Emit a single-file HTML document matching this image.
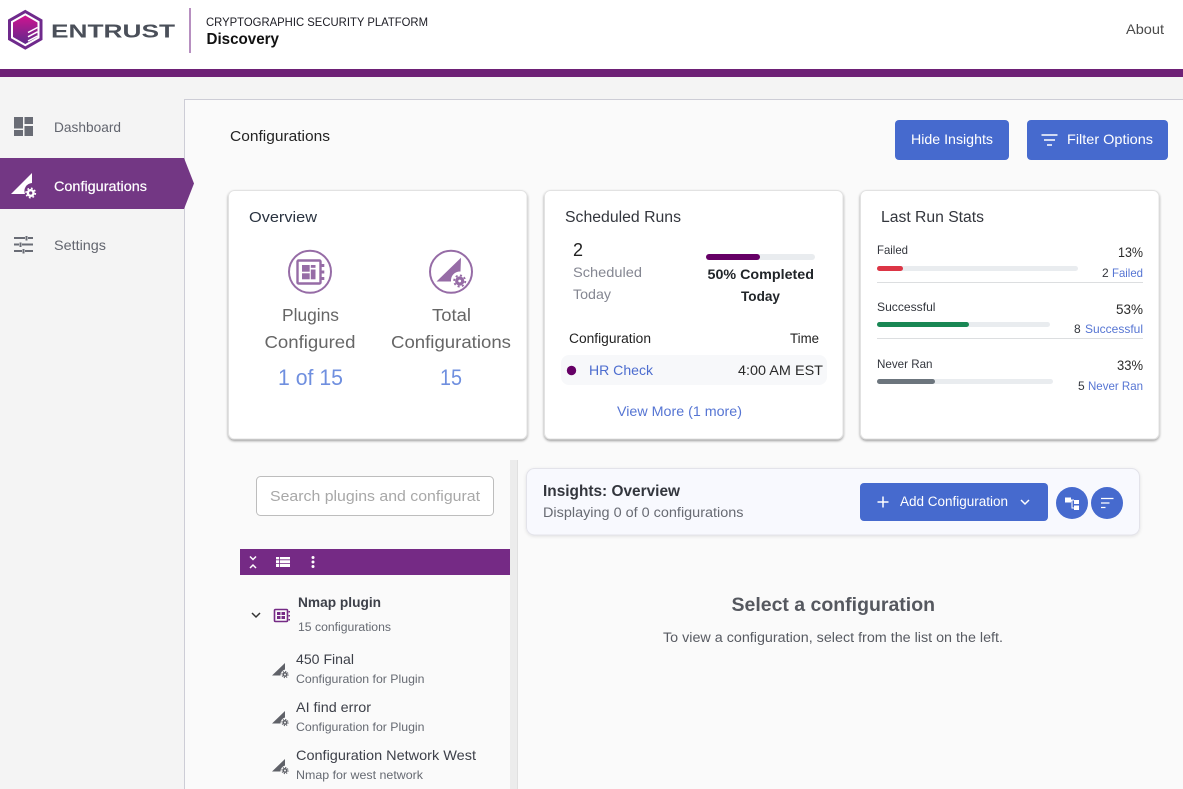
<!DOCTYPE html>
<html lang="en"><head><meta charset="utf-8"><title>Entrust Discovery</title>
<style>
html,body{margin:0;padding:0;width:1183px;height:789px;overflow:hidden;background:#f4f4f4}
svg{display:block;position:absolute;left:0;top:0}
text{font-family:"Liberation Sans",sans-serif;white-space:pre}
.b{font-weight:bold}
</style></head><body>
<svg width="1183" height="789" viewBox="0 0 1183 789" xmlns="http://www.w3.org/2000/svg">
<defs>
<linearGradient id="g" x1="0" y1="0" x2="0" y2="1"><stop offset="0" stop-color="#cf1390"/><stop offset="1" stop-color="#5f2a8c"/></linearGradient>
<filter id="s" x="-5%" y="-5%" width="110%" height="110%"><feDropShadow dx="0" dy="1.5" stdDeviation="1.2" flood-color="#000" flood-opacity=".38"/></filter>
<filter id="s2" x="-5%" y="-10%" width="110%" height="125%"><feDropShadow dx="0" dy="1" stdDeviation="1.5" flood-color="#000" flood-opacity=".1"/></filter>
</defs>

<!-- backgrounds -->
<rect x="0" y="0" width="1183" height="69" fill="#fff"/>
<rect x="0" y="69" width="1183" height="8" fill="#6e2176"/>
<rect x="0" y="77" width="1183" height="712" fill="#f4f4f4"/>
<rect x="184.500" y="99.500" width="1000" height="700" fill="#fafafa" stroke="#cdcdd6"/>

<!-- logo -->
<path d="M25.300 11.500 L41 20.500 L41 39 L25.300 48 L9.500 39 L9.500 20.500 Z" fill="#fff" stroke="#6f2a8c" stroke-width="3" stroke-linejoin="miter"/>
<path d="M25.300 15.500 L37.500 22.500 L37.500 37 L25.300 44 L13 37 L13 22.500 Z" fill="url(#g)"/>
<path d="M28 32.500 L37.500 27.500 M28 36.800 L37.500 31.800 M28 41 L37.500 36" stroke="#fff" stroke-width="1.500" fill="none"/>
<text x="51" y="37.500" font-size="18" font-weight="bold" fill="#4a4f59" textLength="124" lengthAdjust="spacingAndGlyphs">ENTRUST</text>
<rect x="189" y="8" width="2" height="45" fill="#b78fc0"/>
<text x="206" y="26" font-size="12" fill="#1c1c24" textLength="222" lengthAdjust="spacingAndGlyphs">CRYPTOGRAPHIC SECURITY PLATFORM</text>
<text x="206.500" y="44" font-size="15.500" class="b" fill="#111" textLength="72.500" lengthAdjust="spacingAndGlyphs">Discovery</text>
<text x="1126" y="34" font-size="14" fill="#4a4a4a" textLength="38" lengthAdjust="spacingAndGlyphs">About</text>

<!-- sidebar -->
<g fill="#696c75"><rect x="14" y="117" width="9" height="11.500"/><rect x="14" y="130" width="9" height="6"/><rect x="24.500" y="117" width="8.500" height="7"/><rect x="24.500" y="126" width="8.500" height="10"/></g>
<text x="54" y="132" font-size="14" fill="#62656e" textLength="67" lengthAdjust="spacingAndGlyphs">Dashboard</text>
<path d="M0 158 L184 158 L194 183.500 L184 209 L0 209 Z" fill="#733784"/>
<path d="M11 194 L32 173 L32 183 A8 8 0 0 0 25 194 Z" fill="#fff"/>
<circle cx="30.700" cy="193" r="2.800" fill="none" stroke="#fff" stroke-width="2.400"/><circle cx="30.700" cy="193" r="4.700" fill="none" stroke="#fff" stroke-width="1.500" stroke-dasharray="1.800 1.900"/>
<text x="54" y="191" font-size="14" fill="#fff" stroke="#fff" stroke-width=".2" textLength="93" lengthAdjust="spacingAndGlyphs">Configurations</text>
<g stroke="#696c75" stroke-width="2" fill="none"><path d="M14 238h11M28 238h5M14 244.500h5M22 244.500h11M14 251h8M25 251h8"/><path d="M26.500 236v4.500M20.500 242.500v4.500M23.500 249v4.500" stroke-width="2"/></g>
<text x="54" y="250" font-size="14" fill="#62656e" textLength="52" lengthAdjust="spacingAndGlyphs">Settings</text>

<!-- page header -->
<text x="230" y="141" font-size="15" fill="#232323" textLength="100" lengthAdjust="spacingAndGlyphs">Configurations</text>
<rect x="895" y="120" width="114" height="40" rx="4" fill="#466ace"/>
<text x="911" y="144" font-size="14" fill="#fff" textLength="82" lengthAdjust="spacingAndGlyphs">Hide Insights</text>
<rect x="1027" y="120" width="141" height="40" rx="4" fill="#466ace"/>
<path d="M1041.500 135h16M1044 140h11M1047 145h5" stroke="#fff" stroke-width="1.500" fill="none"/>
<text x="1067" y="144" font-size="14" fill="#fff" textLength="86" lengthAdjust="spacingAndGlyphs">Filter Options</text>

<!-- cards -->
<g fill="#fff" stroke="#e2e2e2" filter="url(#s)">
<rect x="228.500" y="190.500" width="298.500" height="248.500" rx="6"/>
<rect x="544.500" y="190.500" width="298.500" height="248.500" rx="6"/>
<rect x="860.500" y="190.500" width="298.500" height="248.500" rx="6"/>
</g>

<!-- overview -->
<text x="249" y="222" font-size="15" fill="#2a3340" textLength="68" lengthAdjust="spacingAndGlyphs">Overview</text>
<circle cx="310" cy="271.800" r="21" fill="none" stroke="#966ca6" stroke-width="2"/>
<rect x="297.500" y="260.500" width="23" height="23" rx="1" fill="none" stroke="#966ca6" stroke-width="2.400"/>
<g fill="#966ca6"><rect x="302" y="265" width="7.700" height="6.700"/><rect x="310.800" y="265" width="4.700" height="2.800"/><rect x="310.800" y="269.500" width="4.700" height="9.800"/><rect x="302" y="273.300" width="7.700" height="6"/><rect x="321.500" y="264" width="2.800" height="3"/><rect x="321.500" y="270.500" width="2.800" height="3"/><rect x="321.500" y="277" width="2.800" height="3"/></g>
<circle cx="451" cy="271.800" r="21" fill="none" stroke="#966ca6" stroke-width="2"/>
<path d="M436.500 281.500 L461 257.800 L460.500 271.500 A9 9 0 0 0 451 281.500 Z" fill="#966ca6"/>
<circle cx="459.700" cy="281" r="3" fill="none" stroke="#966ca6" stroke-width="3.200"/><circle cx="459.700" cy="281" r="5.600" fill="none" stroke="#966ca6" stroke-width="1.800" stroke-dasharray="2.100 2.300"/>
<g font-size="17.500" fill="#666">
<text x="282" y="321" textLength="57" lengthAdjust="spacingAndGlyphs">Plugins</text>
<text x="264.500" y="348" textLength="91" lengthAdjust="spacingAndGlyphs">Configured</text>
<text x="432" y="321" textLength="39" lengthAdjust="spacingAndGlyphs">Total</text>
<text x="391" y="348" textLength="120" lengthAdjust="spacingAndGlyphs">Configurations</text>
</g>
<g font-size="22" fill="#6f8fdf">
<text x="278" y="385" textLength="65" lengthAdjust="spacingAndGlyphs">1 of 15</text>
<text x="440" y="385" textLength="22" lengthAdjust="spacingAndGlyphs">15</text>
</g>

<!-- scheduled -->
<text x="565" y="222" font-size="15.500" fill="#33363d" textLength="116" lengthAdjust="spacingAndGlyphs">Scheduled Runs</text>
<text x="573" y="256" font-size="18" fill="#222">2</text>
<text x="573" y="277" font-size="14" fill="#858792" textLength="69" lengthAdjust="spacingAndGlyphs">Scheduled</text>
<text x="573" y="299" font-size="14" fill="#858792" textLength="38" lengthAdjust="spacingAndGlyphs">Today</text>
<rect x="706" y="254" width="109" height="6" rx="3" fill="#e9ecef"/>
<rect x="706" y="254" width="54" height="6" rx="3" fill="#660066"/>
<text x="707.500" y="279" font-size="14" class="b" fill="#212529" textLength="106.500" lengthAdjust="spacingAndGlyphs">50% Completed</text>
<text x="741" y="301" font-size="14" class="b" fill="#212529" textLength="39" lengthAdjust="spacingAndGlyphs">Today</text>
<text x="569" y="343" font-size="13.500" fill="#222" textLength="82" lengthAdjust="spacingAndGlyphs">Configuration</text>
<text x="790" y="343" font-size="13.500" fill="#222" textLength="29" lengthAdjust="spacingAndGlyphs">Time</text>
<rect x="561" y="355" width="266" height="30" rx="8" fill="#f7f8fa"/>
<circle cx="571.500" cy="370.500" r="4.700" fill="#660066"/>
<text x="589" y="375" font-size="14" fill="#4d6dcf" textLength="64" lengthAdjust="spacingAndGlyphs">HR Check</text>
<text x="738" y="375" font-size="14" fill="#2a2a2a" textLength="85" lengthAdjust="spacingAndGlyphs">4:00 AM EST</text>
<text x="617" y="416" font-size="14" fill="#5675d3" textLength="125" lengthAdjust="spacingAndGlyphs">View More (1 more)</text>

<!-- last run -->
<text x="881" y="222" font-size="15.500" fill="#33363d" textLength="103" lengthAdjust="spacingAndGlyphs">Last Run Stats</text>
<g font-size="12" fill="#33363d">
<text x="877" y="254" textLength="31" lengthAdjust="spacingAndGlyphs">Failed</text>
<text x="877" y="311" textLength="58.500" lengthAdjust="spacingAndGlyphs">Successful</text>
<text x="877" y="368" textLength="55.500" lengthAdjust="spacingAndGlyphs">Never Ran</text>
</g>
<g font-size="14" fill="#2a2a2a">
<text x="1118" y="257" textLength="25" lengthAdjust="spacingAndGlyphs">13%</text>
<text x="1116" y="314" textLength="27" lengthAdjust="spacingAndGlyphs">53%</text>
<text x="1117" y="370" textLength="26" lengthAdjust="spacingAndGlyphs">33%</text>
</g>
<rect x="877" y="266" width="201" height="5" rx="2.500" fill="#e9ecef"/><rect x="877" y="266" width="26" height="5" rx="2.500" fill="#dc3545"/>
<rect x="877" y="322" width="173" height="5" rx="2.500" fill="#e9ecef"/><rect x="877" y="322" width="92" height="5" rx="2.500" fill="#198754"/>
<rect x="877" y="379" width="176" height="5" rx="2.500" fill="#e9ecef"/><rect x="877" y="379" width="58" height="5" rx="2.500" fill="#6c757d"/>
<rect x="877" y="282" width="266" height="1" fill="#dcdee0"/>
<rect x="877" y="338" width="266" height="1" fill="#dcdee0"/>
<g font-size="12" fill="#33363d">
<text x="1102" y="277">2</text><text x="1074" y="333">8</text><text x="1078" y="390">5</text>
</g>
<g font-size="12" fill="#5675d3">
<text x="1112" y="277" textLength="31" lengthAdjust="spacingAndGlyphs">Failed</text>
<text x="1085" y="333" textLength="58" lengthAdjust="spacingAndGlyphs">Successful</text>
<text x="1088" y="390" textLength="55" lengthAdjust="spacingAndGlyphs">Never Ran</text>
</g>

<!-- left tree -->
<rect x="510" y="460" width="7" height="329" fill="#ececec"/>
<rect x="517" y="460" width="1" height="329" fill="#e0e0e0"/>
<rect x="256.500" y="476.500" width="237" height="39" rx="4" fill="#fff" stroke="#bdbdbd"/>
<text x="270" y="501" font-size="15" fill="#a8a8a8" textLength="210" lengthAdjust="spacingAndGlyphs">Search plugins and configurat</text>
<rect x="240" y="549" width="270" height="26" fill="#752a85"/>
<path d="M250 556.500l3 3 3-3M250 568l3-3 3 3" stroke="#fff" stroke-width="1.500" fill="none"/>
<g fill="#fff"><rect x="276" y="557" width="14" height="10"/><circle cx="313" cy="557.500" r="1.500"/><circle cx="313" cy="562" r="1.500"/><circle cx="313" cy="566.500" r="1.500"/></g>
<path d="M276 559.800h14M276 563.500h14M279.500 557v10" stroke="#752a85" stroke-width=".8" fill="none"/>
<path d="M252 613l4 4 4-4" stroke="#333" stroke-width="1.500" fill="none"/>
<rect x="274.500" y="609.500" width="13" height="12" rx="1" fill="none" stroke="#752a85" stroke-width="1.600"/>
<g fill="#752a85"><rect x="277" y="612" width="3.500" height="3"/><rect x="281.500" y="612" width="3.500" height="3"/><rect x="277" y="616" width="3.500" height="3"/><rect x="281.500" y="616" width="3.500" height="3"/><rect x="288.500" y="611" width="1.500" height="1.500"/><rect x="288.500" y="615" width="1.500" height="1.500"/><rect x="288.500" y="619" width="1.500" height="1.500"/></g>
<text x="298" y="607" font-size="13.500" class="b" fill="#3d4049" textLength="83" lengthAdjust="spacingAndGlyphs">Nmap plugin</text>
<text x="298" y="631" font-size="11.500" fill="#666a72" textLength="93" lengthAdjust="spacingAndGlyphs">15 configurations</text>

<g fill="#5f6168">
<path d="M272 675.500 L285 663 L285 669.500 A6 6 0 0 0 280.500 675.500 Z"/>
<path d="M272 723.500 L285 711 L285 717.500 A6 6 0 0 0 280.500 723.500 Z"/>
<path d="M272 771.500 L285 759 L285 765.500 A6 6 0 0 0 280.500 771.500 Z"/>
</g>
<g fill="none" stroke="#5f6168">
<circle cx="285" cy="674.500" r="1.700" stroke-width="1.500"/><circle cx="285" cy="674.500" r="3.100" stroke-width="1" stroke-dasharray="1.200 1.200"/>
<circle cx="285" cy="722.500" r="1.700" stroke-width="1.500"/><circle cx="285" cy="722.500" r="3.100" stroke-width="1" stroke-dasharray="1.200 1.200"/>
<circle cx="285" cy="770.500" r="1.700" stroke-width="1.500"/><circle cx="285" cy="770.500" r="3.100" stroke-width="1" stroke-dasharray="1.200 1.200"/>
</g>
<g font-size="14" fill="#3d4049">
<text x="296" y="664" textLength="58" lengthAdjust="spacingAndGlyphs">450 Final</text>
<text x="296" y="712" textLength="75" lengthAdjust="spacingAndGlyphs">AI find error</text>
<text x="296" y="760" textLength="180" lengthAdjust="spacingAndGlyphs">Configuration Network West</text>
</g>
<g font-size="12" fill="#666a72">
<text x="296" y="683" textLength="128.500" lengthAdjust="spacingAndGlyphs">Configuration for Plugin</text>
<text x="296" y="731" textLength="128.500" lengthAdjust="spacingAndGlyphs">Configuration for Plugin</text>
<text x="296" y="779" textLength="127" lengthAdjust="spacingAndGlyphs">Nmap for west network</text>
</g>

<!-- insights -->
<rect x="526.500" y="468.500" width="613" height="66.500" rx="8" fill="#f8f9fe" stroke="#e3e3ea" filter="url(#s2)"/>
<text x="543" y="496" font-size="15.500" class="b" fill="#33363d" textLength="137" lengthAdjust="spacingAndGlyphs">Insights: Overview</text>
<text x="543" y="517" font-size="13.500" fill="#686b73" textLength="200.500" lengthAdjust="spacingAndGlyphs">Displaying 0 of 0 configurations</text>
<rect x="860" y="483" width="188" height="38" rx="4" fill="#466ace"/>
<path d="M883 496.500v11M877.500 502h11" stroke="#fff" stroke-width="1.500" fill="none"/>
<text x="900" y="506" font-size="13.500" fill="#fff" textLength="108" lengthAdjust="spacingAndGlyphs">Add Configuration</text>
<path d="M1021 500l4 4 4-4" stroke="#fff" stroke-width="1.500" fill="none"/>
<circle cx="1072" cy="503" r="16" fill="#466ace"/>
<g fill="#fff"><rect x="1065" y="497.500" width="6" height="5"/><rect x="1074" y="500" width="5" height="4"/><rect x="1074" y="505.500" width="5" height="4.500"/><path d="M1071 499.500h3v1h-1.500v7h1.500v1h-2.500v-7h-.5z"/></g>
<circle cx="1107" cy="503" r="16" fill="#466ace"/>
<path d="M1101 498.500h12.500M1101 503h8.500M1101 507.500h4.500" stroke="#fff" stroke-width="1.300" fill="none"/>

<text x="731.500" y="611" font-size="19" class="b" fill="#55585f" textLength="203.500" lengthAdjust="spacingAndGlyphs">Select a configuration</text>
<text x="663" y="642" font-size="13.500" fill="#585b62" textLength="340" lengthAdjust="spacingAndGlyphs">To view a configuration, select from the list on the left.</text>
</svg>
</body></html>
